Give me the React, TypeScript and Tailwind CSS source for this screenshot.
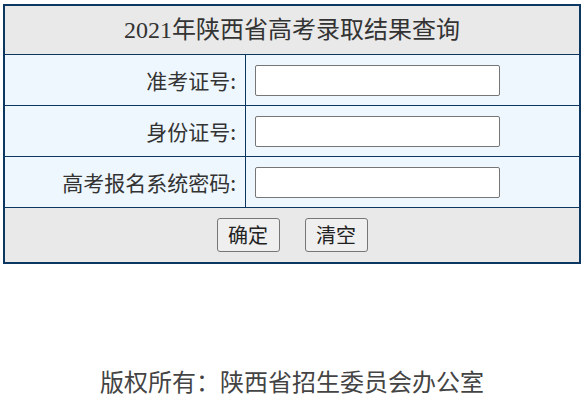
import React from "react";

const rows = ["准考证号:", "身份证号:", "高考报名系统密码:"];

function App() {
  return (
    <div className="w-[588px] h-[414px] bg-white pt-[4px] pl-[3px] font-['Liberation_Serif','Noto_Sans_CJK_SC',serif] text-[#333]">
      {/* Query table */}
      <div className="w-[578px] border-2 border-[#0b3760]">
        <div className="h-[49px] border-b border-[#0b3760] bg-[#e9e9e9] flex items-center justify-center text-[24px] leading-none">
          2021年陕西省高考录取结果查询
        </div>

        {rows.map((label) => (
          <div key={label} className="h-[51px] flex border-b border-[#0b3760] bg-[#eef7fe]">
            <div className="w-[241px] border-r border-[#0b3760] flex items-center justify-end pr-[9px] text-[21px] leading-none font-['Noto_Sans_CJK_SC',sans-serif]">
              {label}
            </div>
            <div className="flex-1 flex items-center pl-[9px]">
              <input
                type="text"
                className="w-[245px] h-[31px] bg-white border border-[#767676] rounded-[2px] outline-none"
              />
            </div>
          </div>
        ))}

        <div className="h-[54px] bg-[#e9e9e9] flex items-center justify-center gap-[25px]">
          <button className="w-[63px] h-[34px] bg-[#efefef] border border-[#767676] rounded-[3px] text-[20px] text-[#222] font-['Noto_Sans_CJK_SC',sans-serif] leading-none">
            确定
          </button>
          <button className="w-[63px] h-[34px] bg-[#efefef] border border-[#767676] rounded-[3px] text-[20px] text-[#222] font-['Noto_Sans_CJK_SC',sans-serif] leading-none">
            清空
          </button>
        </div>
      </div>

      {/* Footer */}
      <div className="w-[578px] mt-[99px] text-center text-[24px] leading-[36px] text-[#444] font-['Noto_Sans_CJK_SC',sans-serif]">
        版权所有：陕西省招生委员会办公室
      </div>
    </div>
  );
}

export default App;
